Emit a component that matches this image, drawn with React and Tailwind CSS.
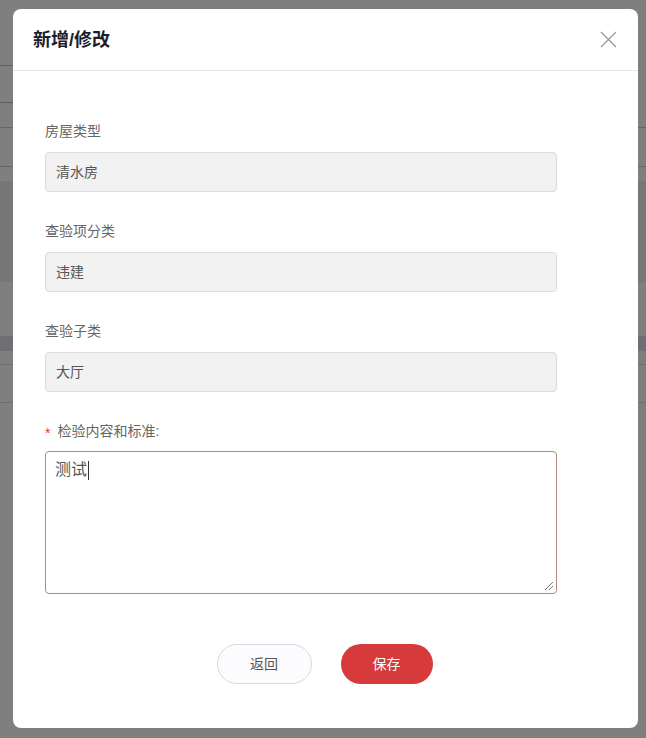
import React from 'react';

const font = { fontFamily: '"Liberation Sans", "Noto Sans CJK SC", sans-serif' };

const Field = ({ label, value }) => (
  <div className="flex flex-col">
    <div className="h-5 leading-5 text-[14px] text-[#666]">{label}</div>
    <div className="mt-[11px] h-10 w-[512px] rounded border border-[#dcdcdc] bg-[#f2f2f2] px-[10px] flex items-center text-[14px] text-[#555]">
      {value}
    </div>
  </div>
);

export default function App() {
  return (
    <div className="relative h-[738px] w-[646px] overflow-hidden bg-white" style={font}>
      {/* page behind the overlay */}
      <div className="flex flex-col">
        <div className="h-[65px]" />
        <div className="flex">
          <div className="h-[38px] w-[60px] rounded border border-[#bbb] -ml-[20px]" />
        </div>
        <div className="h-[25px] border-b border-[#ccc]" />
        <div className="h-[39px] border-b border-[#ccc]" />
        <div className="h-[14px]" />
        <div className="h-[101px] bg-[#eee]" />
        <div className="h-[54px]" />
        <div className="h-[15px] bg-[#dedee6]" />
        <div className="h-[14px] border-b border-[#ddd]" />
        <div className="h-[38px] border-b border-[#ddd]" />
      </div>
      <div className="absolute inset-0 bg-black/50" />

      {/* dialog */}
      <div className="absolute left-[13px] top-[9px] w-[625px] h-[719px] rounded-lg bg-white flex flex-col">
        <div className="h-[62px] border-b border-[#e5e5e5] flex items-center justify-between pl-[20px] pr-[21px]">
          <span className="text-[18px] font-bold text-[#1c1f2b] pt-[2px]">新增/修改</span>
          <svg width="17" height="17" viewBox="0 0 17 17">
            <path d="M1 1 L16 16 M16 1 L1 16" stroke="#999" strokeWidth="1.3" fill="none" />
          </svg>
        </div>

        <div className="flex flex-col pl-[32px] pt-[50px] gap-[29px]">
          <Field label="房屋类型" value="清水房" />
          <Field label="查验项分类" value="违建" />
          <Field label="查验子类" value="大厅" />
          <div className="flex flex-col">
            <div className="h-5 leading-5 text-[14px] text-[#666] flex items-center">
              <span className="text-[#e23c1f] mr-[7px] pt-[3px]">*</span>
              <span>检验内容和标准:</span>
            </div>
            <div className="mt-[10px] relative h-[143px] w-[512px] rounded border border-[#b98777] bg-white px-[9px] pt-[6px]">
              <div className="flex items-center text-[16px] text-[#555] leading-6">
                测试<span className="inline-block w-px h-[19px] bg-[#333] ml-[1px]" />
              </div>
              <svg width="10" height="10" viewBox="0 0 10 10" className="absolute right-[2px] bottom-[2px]">
                <path d="M9 1 L1 9 M9 5 L5 9" stroke="#777" strokeWidth="1" fill="none" />
              </svg>
            </div>
          </div>
        </div>

        <div className="flex justify-center gap-[29px] mt-[50px] pr-[2px]">
          <button className="h-10 w-[95px] rounded-full border border-[#d8d8e0] bg-[#fcfbfe] text-[14px] text-[#555]">
            返回
          </button>
          <button className="h-10 w-[92px] rounded-full bg-[#d63a3a] text-[14px] text-white">
            保存
          </button>
        </div>
      </div>
    </div>
  );
}
